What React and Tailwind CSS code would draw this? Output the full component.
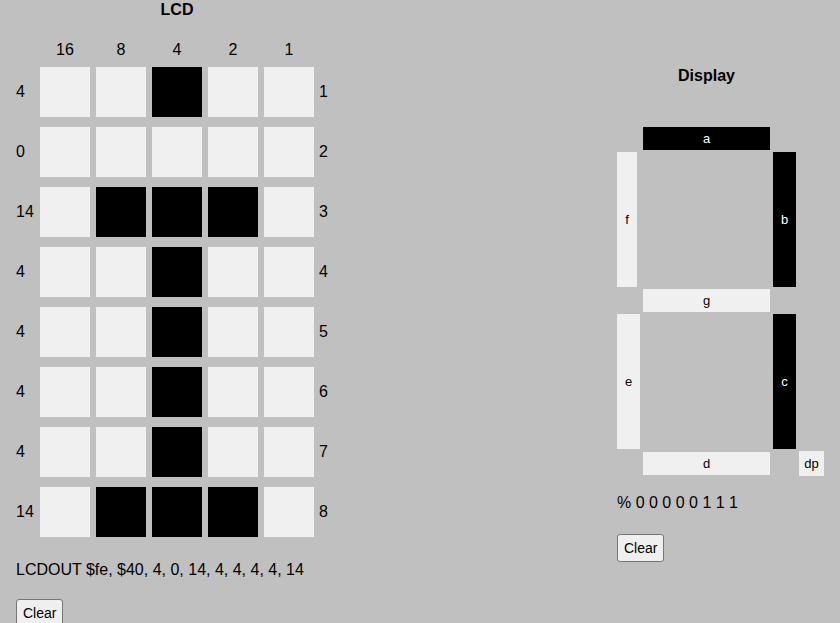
import React from "react";

const rows = [4, 0, 14, 4, 4, 4, 4, 14];
const bits = [16, 8, 4, 2, 1];

function Seg({ on, label, className }) {
  return (
    <div
      className={`flex items-center justify-center text-[13px] leading-none ${
        on ? "bg-black text-white" : "bg-[#f0f0f0] text-black"
      } ${className}`}
    >
      {label}
    </div>
  );
}

function ClearBtn() {
  return (
    <button className="w-fit h-[28px] px-[6px] border border-[#767676] rounded-[3px] bg-[#efefef] text-[14px] leading-none text-black">
      Clear
    </button>
  );
}

export default function App() {
  return (
    <div
      className="w-full h-[623px] overflow-hidden bg-[#c0c0c0] text-black flex"
      style={{ fontFamily: '"Liberation Sans", Arial, sans-serif' }}
    >
      {/* LCD section */}
      <div className="ml-[16px] w-[330px] flex flex-col">
        <div className="mt-[1px] ml-[24px] w-[274px] text-center text-[16px] font-bold leading-[18px]">
          LCD
        </div>
        <div className="ml-[24px] mt-[22px] flex gap-[6px] text-[16px] leading-[18px]">
          {bits.map((b) => (
            <div key={b} className="w-[50px] text-center">
              {b}
            </div>
          ))}
        </div>
        <div className="mt-[8px] flex flex-col gap-[10px]">
          {rows.map((v, i) => (
            <div key={i} className="flex items-center h-[50px] text-[16px]">
              <div className="w-[24px]">{v}</div>
              <div className="flex gap-[6px]">
                {bits.map((b) => (
                  <div
                    key={b}
                    className={`w-[50px] h-[50px] ${
                      v & b ? "bg-black" : "bg-[#f0f0f0]"
                    }`}
                  />
                ))}
              </div>
              <div className="ml-[5px]">{i + 1}</div>
            </div>
          ))}
        </div>
        <div className="mt-[24px] text-[16px] leading-[18px] whitespace-nowrap">
          LCDOUT $fe, $40, 4, 0, 14, 4, 4, 4, 4, 14
        </div>
        <div className="mt-[20px]">
          <ClearBtn />
        </div>
      </div>

      {/* Display section */}
      <div className="ml-[271px] flex flex-col">
        <div className="mt-[67px] ml-[26px] w-[127px] text-center text-[16px] font-bold leading-[18px]">
          Display
        </div>
        <div className="mt-[42px] grid grid-cols-[23px_127px_23px_25px] grid-rows-[23px_135px_23px_135px_25px] gap-x-[3px] gap-y-[2px]">
          <div />
          <Seg on label="a" className="h-[23px]" />
          <div />
          <div />

          <Seg label="f" className="w-[20px]" />
          <div />
          <Seg on label="b" className="w-[23px]" />
          <div />

          <div />
          <Seg label="g" className="h-[23px]" />
          <div />
          <div />

          <Seg label="e" className="w-[23px]" />
          <div />
          <Seg on label="c" className="w-[23px]" />
          <div />

          <div />
          <Seg label="d" className="h-[23px] self-center" />
          <div />
          <Seg label="dp" className="w-[25px] h-[25px]" />
        </div>
        <div className="mt-[18px] text-[16px] leading-[18px] whitespace-nowrap">
          % 0 0 0 0 0 1 1 1
        </div>
        <div className="mt-[22px]">
          <ClearBtn />
        </div>
      </div>
    </div>
  );
}
